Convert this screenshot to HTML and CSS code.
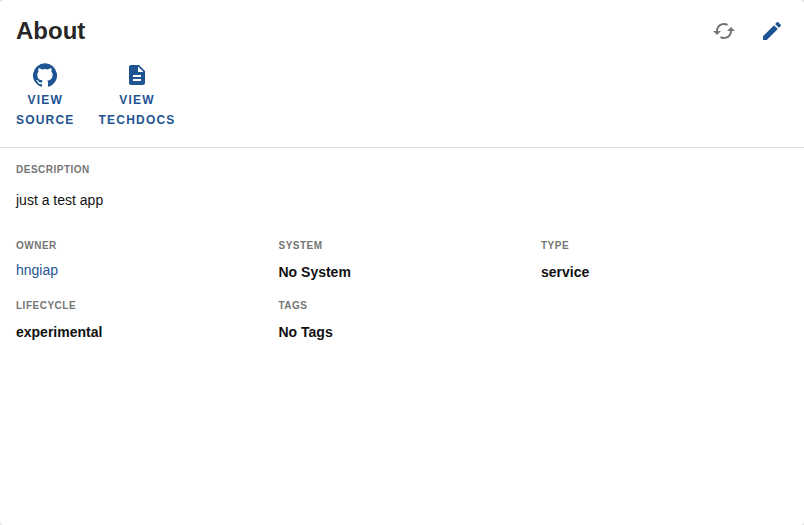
FILE: index.html
```html
<!DOCTYPE html>
<html lang="en">
<head>
<meta charset="utf-8">
<title>About</title>
<link rel="stylesheet" href="styles.css">
</head>
<body>
<article class="card">
  <header class="card-header">
    <div class="title-row">
      <h2 class="title">About</h2>
      <div class="actions">
        <svg class="icon muted" viewBox="0 0 24 24"><path d="M19 8l-4 4h3c0 3.31-2.69 6-6 6-1.01 0-1.97-.25-2.8-.7l-1.46 1.46C8.97 19.54 10.43 20 12 20c4.42 0 8-3.58 8-8h3l-4-4zM6 12c0-3.31 2.69-6 6-6 1.01 0 1.97.25 2.8.7l1.46-1.46C15.03 4.46 13.57 4 12 4c-4.42 0-8 3.58-8 8H1l4 4 4-4H6z"/></svg>
        <svg class="icon" viewBox="0 0 24 24"><path d="M3 17.25V21h3.75L17.81 9.94l-3.75-3.75L3 17.25zM20.71 7.04c.39-.39.39-1.02 0-1.41l-2.34-2.34c-.39-.39-1.02-.39-1.41 0l-1.83 1.83 3.75 3.75 1.83-1.83z"/></svg>
      </div>
    </div>
    <nav class="links">
      <a class="link"><svg class="icon" viewBox="0 0 24 24"><path d="M12 .3a12 12 0 0 0-3.8 23.4c.6.1.8-.3.8-.6v-2c-3.3.7-4-1.6-4-1.6-.6-1.4-1.4-1.8-1.4-1.8-1-.7.1-.7.1-.7 1.2 0 1.9 1.2 1.9 1.2 1 1.8 2.8 1.3 3.5 1 0-.8.4-1.3.7-1.6-2.7-.3-5.5-1.3-5.5-6 0-1.2.5-2.3 1.3-3.1-.2-.4-.6-1.6 0-3.2 0 0 1-.3 3.4 1.2a11.5 11.5 0 0 1 6 0c2.3-1.5 3.3-1.2 3.3-1.2.6 1.6.2 2.8 0 3.2.9.8 1.3 1.9 1.3 3.2 0 4.6-2.8 5.6-5.5 5.9.5.4.9 1 .9 2.2v3.3c0 .3.1.7.8.6A12 12 0 0 0 12 .3"/></svg><span>View<br>Source</span></a>
      <a class="link"><svg class="icon" viewBox="0 0 24 24"><path d="M14 2H6c-1.1 0-1.99.9-1.99 2L4 20c0 1.1.89 2 1.99 2H18c1.1 0 2-.9 2-2V8l-6-6zm2 16H8v-2h8v2zm0-4H8v-2h8v2zm-3-5V3.5L18.5 9H13z"/></svg><span>View<br>TechDocs</span></a>
    </nav>
  </header>
  <section class="content">
    <div class="field wide"><h3>Description</h3><p class="text">just a test app</p></div>
    <div class="field"><h3>Owner</h3><a class="owner">hngiap</a></div>
    <div class="field"><h3>System</h3><p>No System</p></div>
    <div class="field"><h3>Type</h3><p>service</p></div>
    <div class="field"><h3>Lifecycle</h3><p>experimental</p></div>
    <div class="field"><h3>Tags</h3><p>No Tags</p></div>
  </section>
</article>
</body>
</html>
```
FILE: styles.css
```css
* { box-sizing: border-box; }
body { margin: 0; background: #dedede; font-family: "Liberation Sans", Arial, sans-serif; color: rgba(0,0,0,.87); }
.card { height: 525px; background: #fff; border-radius: 4px; }
.card-header { height: 148px; padding: 16px 20px 0 16px; border-bottom: 1px solid #e0e0e0; }
.title-row { display: flex; justify-content: space-between; height: 46px; }
.title { margin: 0; font-size: 24px; line-height: 29px; }
.actions { display: flex; gap: 24px; padding-top: 3px; }
.icon { display: block; width: 24px; height: 24px; fill: #1f5493; }
.muted { fill: #757575; }
.links { display: flex; gap: 24px; }
.link { display: flex; flex-direction: column; align-items: center; color: #1f5493; font-size: 12px; font-weight: 700; line-height: 20px; letter-spacing: 1.2px; text-transform: uppercase; text-align: center; padding-top: 1px; }
.link span { margin-top: 3px; }
.content { display: grid; grid-template-columns: repeat(3, 262.5px); padding: 16px 0 0 16px; grid-template-rows: 76px 60px 60px; color: #111; }
.wide { grid-column: 1 / -1; }
h3 { margin: 0; font-size: 10px; line-height: 12px; letter-spacing: .5px; font-weight: 700; color: #757575; text-transform: uppercase; }
p { margin: 10px 0 0; font-size: 14px; font-weight: 700; line-height: 20px; }
.text { margin-top: 14px; font-weight: 400; }
.owner { display: block; margin-top: 8px; font-size: 14px; line-height: 20px; color: #1f5493; }
```
